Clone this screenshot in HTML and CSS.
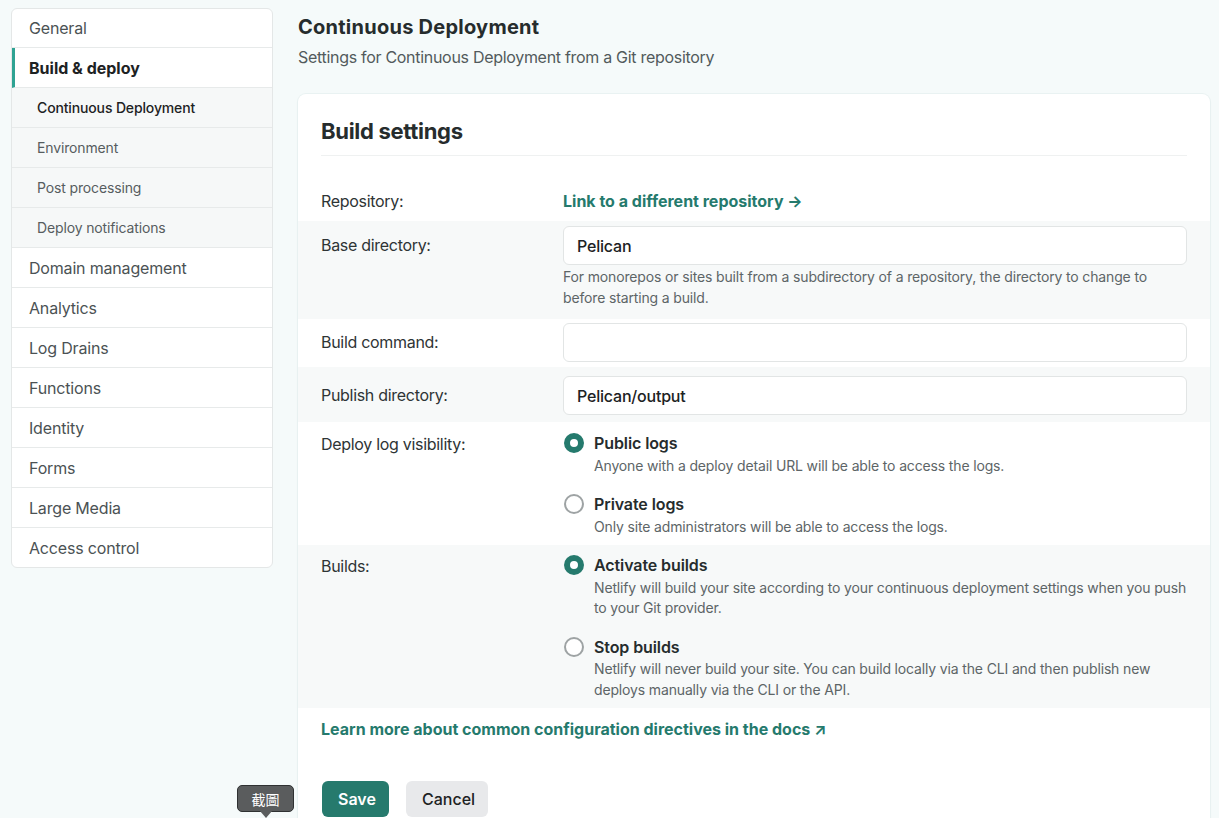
FILE: index.html
```html
<!DOCTYPE html>
<html lang="en">
<head>
<meta charset="utf-8">
<title>Continuous Deployment</title>
<link rel="stylesheet" href="styles.css">
</head>
<body>
<div class="layout">
  <nav class="sidebar">
    <a class="nav-item">General</a>
    <a class="nav-item active">Build &amp; deploy</a>
    <a class="nav-sub current">Continuous Deployment</a>
    <a class="nav-sub">Environment</a>
    <a class="nav-sub">Post processing</a>
    <a class="nav-sub">Deploy notifications</a>
    <a class="nav-item">Domain management</a>
    <a class="nav-item">Analytics</a>
    <a class="nav-item">Log Drains</a>
    <a class="nav-item">Functions</a>
    <a class="nav-item">Identity</a>
    <a class="nav-item">Forms</a>
    <a class="nav-item">Large Media</a>
    <a class="nav-item last">Access control</a>
  </nav>
  <main class="main">
    <h1 class="page-title">Continuous Deployment</h1>
    <p class="page-sub">Settings for Continuous Deployment from a Git repository</p>
    <section class="card">
      <h2 class="card-title">Build settings</h2>
      <div class="rows">
        <div class="row row-repo">
          <div class="label">Repository:</div>
          <div class="value"><a class="link">Link to a different repository →</a></div>
        </div>
        <div class="row alt row-base">
          <div class="label label-input">Base directory:</div>
          <div class="value">
            <div class="input">Pelican</div>
            <p class="help">For monorepos or sites built from a subdirectory of a repository, the directory to change to before starting a build.</p>
          </div>
        </div>
        <div class="row row-cmd">
          <div class="label label-input">Build command:</div>
          <div class="value"><div class="input"></div></div>
        </div>
        <div class="row alt row-pub">
          <div class="label label-input">Publish directory:</div>
          <div class="value"><div class="input">Pelican/output</div></div>
        </div>
        <div class="row row-radio">
          <div class="label">Deploy log visibility:</div>
          <div class="value radios">
            <div class="radio">
              <span class="dot checked"></span>
              <div class="radio-text">
                <div class="radio-title">Public logs</div>
                <p class="help">Anyone with a deploy detail URL will be able to access the logs.</p>
              </div>
            </div>
            <div class="radio">
              <span class="dot"></span>
              <div class="radio-text">
                <div class="radio-title">Private logs</div>
                <p class="help">Only site administrators will be able to access the logs.</p>
              </div>
            </div>
          </div>
        </div>
        <div class="row alt row-radio row-builds">
          <div class="label">Builds:</div>
          <div class="value radios">
            <div class="radio">
              <span class="dot checked"></span>
              <div class="radio-text">
                <div class="radio-title">Activate builds</div>
                <p class="help">Netlify will build your site according to your continuous deployment settings when you push to your Git provider.</p>
              </div>
            </div>
            <div class="radio">
              <span class="dot"></span>
              <div class="radio-text">
                <div class="radio-title">Stop builds</div>
                <p class="help">Netlify will never build your site. You can build locally via the CLI and then publish new deploys manually via the CLI or the API.</p>
              </div>
            </div>
          </div>
        </div>
      </div>
      <p class="docs"><a class="link">Learn more about common configuration directives in the docs ↗</a></p>
      <div class="actions">
        <button class="btn btn-primary">Save</button>
        <button class="btn btn-secondary">Cancel</button>
      </div>
    </section>
  </main>
</div>
<div class="tooltip">截圖</div>
</body>
</html>
```
FILE: styles.css
```css
* { box-sizing: border-box; }
html, body { margin: 0; padding: 0; }
body {
  background: #f5fafa;
  font-family: Inter, "Noto Sans", "Liberation Sans", sans-serif;
  color: #2e3435;
  height: 818px;
  overflow: hidden;
}
.layout {
  display: flex;
  gap: 25px;
  padding: 8px 9px 0 11px;
}
.sidebar {
  flex: 0 0 262px;
  align-self: flex-start;
  display: flex;
  flex-direction: column;
  background: #fff;
  border: 1px solid #e4e7e7;
  border-radius: 6px;
  overflow: hidden;
}
.nav-item, .nav-sub {
  display: flex;
  align-items: center;
  height: 40px;
  border-bottom: 1px solid #e7eaea;
  padding-left: 17px;
  font-size: 16px;
  letter-spacing: -0.18px;
  color: #4b5254;
}
.nav-item.last { border-bottom: none; height: 39px; }
.nav-item:first-child { height: 39px; }
.nav-item.active {
  font-weight: 700;
  color: #1d2223;
  border-left: 3px solid #2fa393;
  padding-left: 14px;
  letter-spacing: 0;
}
.nav-sub {
  background: #f6f8f8;
  font-size: 14px;
  padding-left: 25px;
  letter-spacing: -0.14px;
  color: #565d5f;
}
.nav-sub.current { color: #1d2223; font-weight: 500; }

.main { flex: 1; min-width: 0; }
.page-title {
  margin: 5px 0 0;
  font-size: 20px;
  line-height: 28px;
  font-weight: 700;
  color: #262c2d;
  letter-spacing: 0.25px;
}
.page-sub {
  margin: 4px 0 0;
  font-size: 16px;
  line-height: 24px;
  letter-spacing: -0.3px;
  color: #525a5c;
}
.card {
  margin-top: 25px;
  background: #fff;
  border-radius: 8px;
  box-shadow: 0 0 0 1px rgba(220, 232, 232, 0.45), 0 1px 3px rgba(0, 0, 0, 0.03);
  padding-top: 22px;
  min-height: 760px;
}
.card-title {
  margin: 0 23px;
  font-size: 22px;
  line-height: 30px;
  font-weight: 650;
  letter-spacing: -0.3px;
  color: #262c2d;
  padding-bottom: 9px;
  border-bottom: 1px solid #eff1f1;
}
.rows { margin-top: 24px; }
.row {
  display: flex;
  padding: 0 23px;
}
.row.alt { background: #f7f9f9; }
.label {
  flex: 0 0 242px;
  font-size: 16px;
  line-height: 24px;
  letter-spacing: -0.3px;
  color: #2e3435;
}
.value { flex: 1; min-width: 0; }
.row-repo { padding-top: 9px; padding-bottom: 8px; }
.row-base { padding-top: 5px; padding-bottom: 11px; }
.row-cmd { padding-top: 4px; padding-bottom: 5px; }
.row-pub { padding-top: 9px; padding-bottom: 7px; }
.label-input { padding-top: 7px; }
.link {
  color: #257a6d;
  font-weight: 700;
  font-size: 16px;
  line-height: 24px;
  text-decoration: none;
}
.input {
  height: 39px;
  border: 1px solid #e2e5e5;
  border-radius: 6px;
  background: #fff;
  padding: 0 13px;
  display: flex;
  align-items: center;
  font-size: 16px;
  font-weight: 500;
  letter-spacing: -0.2px;
  color: #1d2223;
}
.help {
  margin: 0;
  font-size: 14px;
  line-height: 21px;
  letter-spacing: -0.15px;
  color: #5d6567;
}
.row-base .help { margin-top: 1px; }
.row-radio { padding-top: 10px; padding-bottom: 8px; }
.row-builds { padding-top: 9px; padding-bottom: 8px; }
.radios { display: flex; flex-direction: column; gap: 17px; }
.radio { display: flex; gap: 10px; }
.dot {
  flex: 0 0 20px;
  width: 20px;
  height: 20px;
  margin-top: 1px;
  border-radius: 50%;
  border: 2px solid #9ea3a4;
  background: #fff;
  margin-left: 1px;
}
.dot.checked {
  border: 6px solid #257a6d;
  background: #fff;
}
.radio-title {
  font-size: 16px;
  line-height: 22px;
  font-weight: 600;
  letter-spacing: -0.1px;
  color: #262c2d;
}
.radio-text .help { margin-top: 1px; }
.row-builds .radio-text .help { line-height: 20.5px; margin-top: 1.5px; }
.docs {
  margin: 9px 23px 0;
  line-height: 24px;
}
.actions {
  display: flex;
  gap: 17px;
  margin: 40px 24px 0;
}
.btn {
  height: 36px;
  border: none;
  border-radius: 6px;
  font-family: Inter, "Noto Sans", "Liberation Sans", sans-serif;
  font-size: 16px;
  padding: 0 16px;
}
.btn-primary {
  background: #267a6d;
  color: #fff;
  font-weight: 600;
  width: 67px;
}
.btn-secondary {
  background: #e8e9eb;
  color: #1d2223;
  font-weight: 500;
  width: 82px;
}
.tooltip {
  position: absolute;
  left: 237px;
  top: 785px;
  width: 57px;
  height: 27px;
  background: #5a5c5d;
  border: 1px solid #2f3132;
  border-radius: 5px;
  color: #fff;
  font-family: "Noto Sans CJK TC", sans-serif;
  font-size: 14px;
  display: flex;
  align-items: center;
  justify-content: center;
}
.tooltip::after {
  content: "";
  position: absolute;
  left: 22px;
  top: 25px;
  border-left: 6px solid transparent;
  border-right: 6px solid transparent;
  border-top: 7px solid #5a5c5d;
}
```
